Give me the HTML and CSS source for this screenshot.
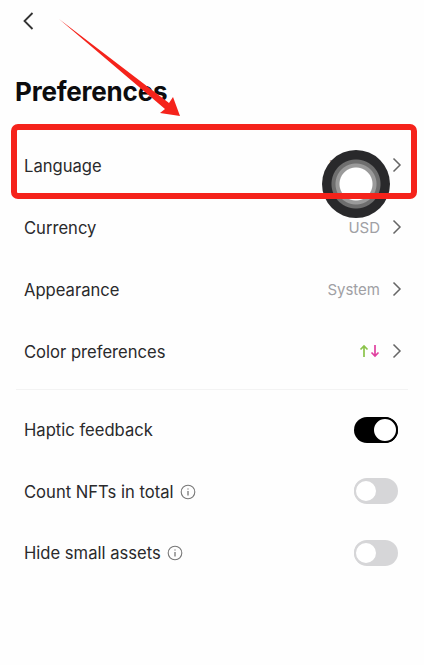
FILE: index.html
```html
<!DOCTYPE html>
<html lang="en">
<head>
<meta charset="utf-8">
<title>Preferences</title>
<link rel="stylesheet" href="styles.css">
</head>
<body>
<div class="screen">
  <header class="topbar">
    <svg class="back" width="12" height="20" viewBox="0 0 12 20"><path d="M10.5 2 L2.5 10 L10.5 18" fill="none" stroke="#333" stroke-width="1.8"/></svg>
  </header>
  <h1 class="title">Preferences</h1>
  <section class="group">
    <div class="row"><span class="label">Language</span><span class="right"><span class="value">English</span><svg class="chev" width="10" height="16" viewBox="0 0 10 16"><path d="M1.5 1.5 L8 8 L1.5 14.5" fill="none" stroke="#666" stroke-width="1.5"/></svg></span></div>
    <div class="row"><span class="label">Currency</span><span class="right"><span class="value">USD</span><svg class="chev" width="10" height="16" viewBox="0 0 10 16"><path d="M1.5 1.5 L8 8 L1.5 14.5" fill="none" stroke="#666" stroke-width="1.5"/></svg></span></div>
    <div class="row"><span class="label">Appearance</span><span class="right"><span class="value">System</span><svg class="chev" width="10" height="16" viewBox="0 0 10 16"><path d="M1.5 1.5 L8 8 L1.5 14.5" fill="none" stroke="#666" stroke-width="1.5"/></svg></span></div>
    <div class="row"><span class="label">Color preferences</span><span class="right"><svg class="updown" width="22" height="14" viewBox="0 0 22 14"><path d="M5 13 V2 M1.5 5.5 L5 2 L8.5 5.5" fill="none" stroke="#8bc34a" stroke-width="1.7"/><path d="M16 1 V12 M12.5 8.5 L16 12 L19.5 8.5" fill="none" stroke="#e0409f" stroke-width="1.7"/></svg><svg class="chev" width="10" height="16" viewBox="0 0 10 16"><path d="M1.5 1.5 L8 8 L1.5 14.5" fill="none" stroke="#666" stroke-width="1.5"/></svg></span></div>
  </section>
  <hr class="divider">
  <section class="group compact">
    <div class="row"><span class="label">Haptic feedback</span><span class="toggle on"><span class="knob"></span></span></div>
    <div class="row"><span class="label">Count NFTs in total<svg class="info" width="16" height="16" viewBox="0 0 16 16"><circle cx="8" cy="8" r="6.8" fill="none" stroke="#777" stroke-width="1.1"/><path d="M8 7 V11.5 M8 4.4 V5.6" stroke="#777" stroke-width="1.3"/></svg></span><span class="toggle"><span class="knob"></span></span></div>
    <div class="row"><span class="label">Hide small assets<svg class="info" width="16" height="16" viewBox="0 0 16 16"><circle cx="8" cy="8" r="6.8" fill="none" stroke="#777" stroke-width="1.1"/><path d="M8 7 V11.5 M8 4.4 V5.6" stroke="#777" stroke-width="1.3"/></svg></span><span class="toggle"><span class="knob"></span></span></div>
  </section>
  <div class="touch"></div>
  <div class="redbox"></div>
  <svg class="arrow" width="424" height="130" viewBox="0 0 424 130"><polygon points="59,19 169,103 173,97 180,116 160,113 165,109" fill="#f5231b"/></svg>
</div>
</body>
</html>
```
FILE: styles.css
```css
* { box-sizing: border-box; }
html, body { margin: 0; padding: 0; background: #fefefe; }
.screen { position: relative; width: 424px; height: 665px; overflow: hidden; font-family: Inter, "Noto Sans", sans-serif; color: #2a2a2c; }
.topbar { height: 71px; padding: 11px 0 0 22px; }
.back { display: block; }
.title { margin: 0; padding-left: 15px; height: 63px; font-size: 26px; line-height: 41px; font-weight: 700; color: #0c0c0e; letter-spacing: -0.2px; }
.row { height: 62px; display: flex; align-items: center; justify-content: space-between; padding: 0 22px 0 24px; }
.compact .row { height: 61.5px; }
.label { display: flex; align-items: center; gap: 6px; font-size: 16.6px; line-height: 22px; padding-top: 1px; }
.right { display: flex; align-items: center; gap: 12px; }
.value { font-size: 15px; color: #a0a0a4; }
.updown { margin-right: -1px; }
.chev { display: block; }
.divider { margin: 7px 16px 9px; border: 0; border-top: 1px solid #f3f3f3; }
.toggle { width: 44px; height: 26px; border-radius: 13px; background: #d6d6d8; display: flex; align-items: center; padding: 0 2px; margin-right: 4px; }
.toggle .knob { width: 24px; height: 24px; margin-left: -2px; border-radius: 50%; background: #fff; border: 2px solid #d6d6d8; }
.toggle.on { background: #000; justify-content: flex-end; padding: 0; }
.toggle.on .knob { border-color: #000; margin: 0; width: 26px; height: 26px; }
.touch { position: absolute; left: 322px; top: 150px; width: 68px; height: 68px; border-radius: 50%; background: radial-gradient(circle, #fff 0 16px, #9a9a9a 17px 20px, #6e6e6e 21px 24px, #29292b 25px); }
.redbox { position: absolute; left: 11px; top: 124px; width: 406px; height: 75px; border: 6px solid #f5231b; border-radius: 7px; }
.arrow { position: absolute; left: 0; top: 0; }
```
